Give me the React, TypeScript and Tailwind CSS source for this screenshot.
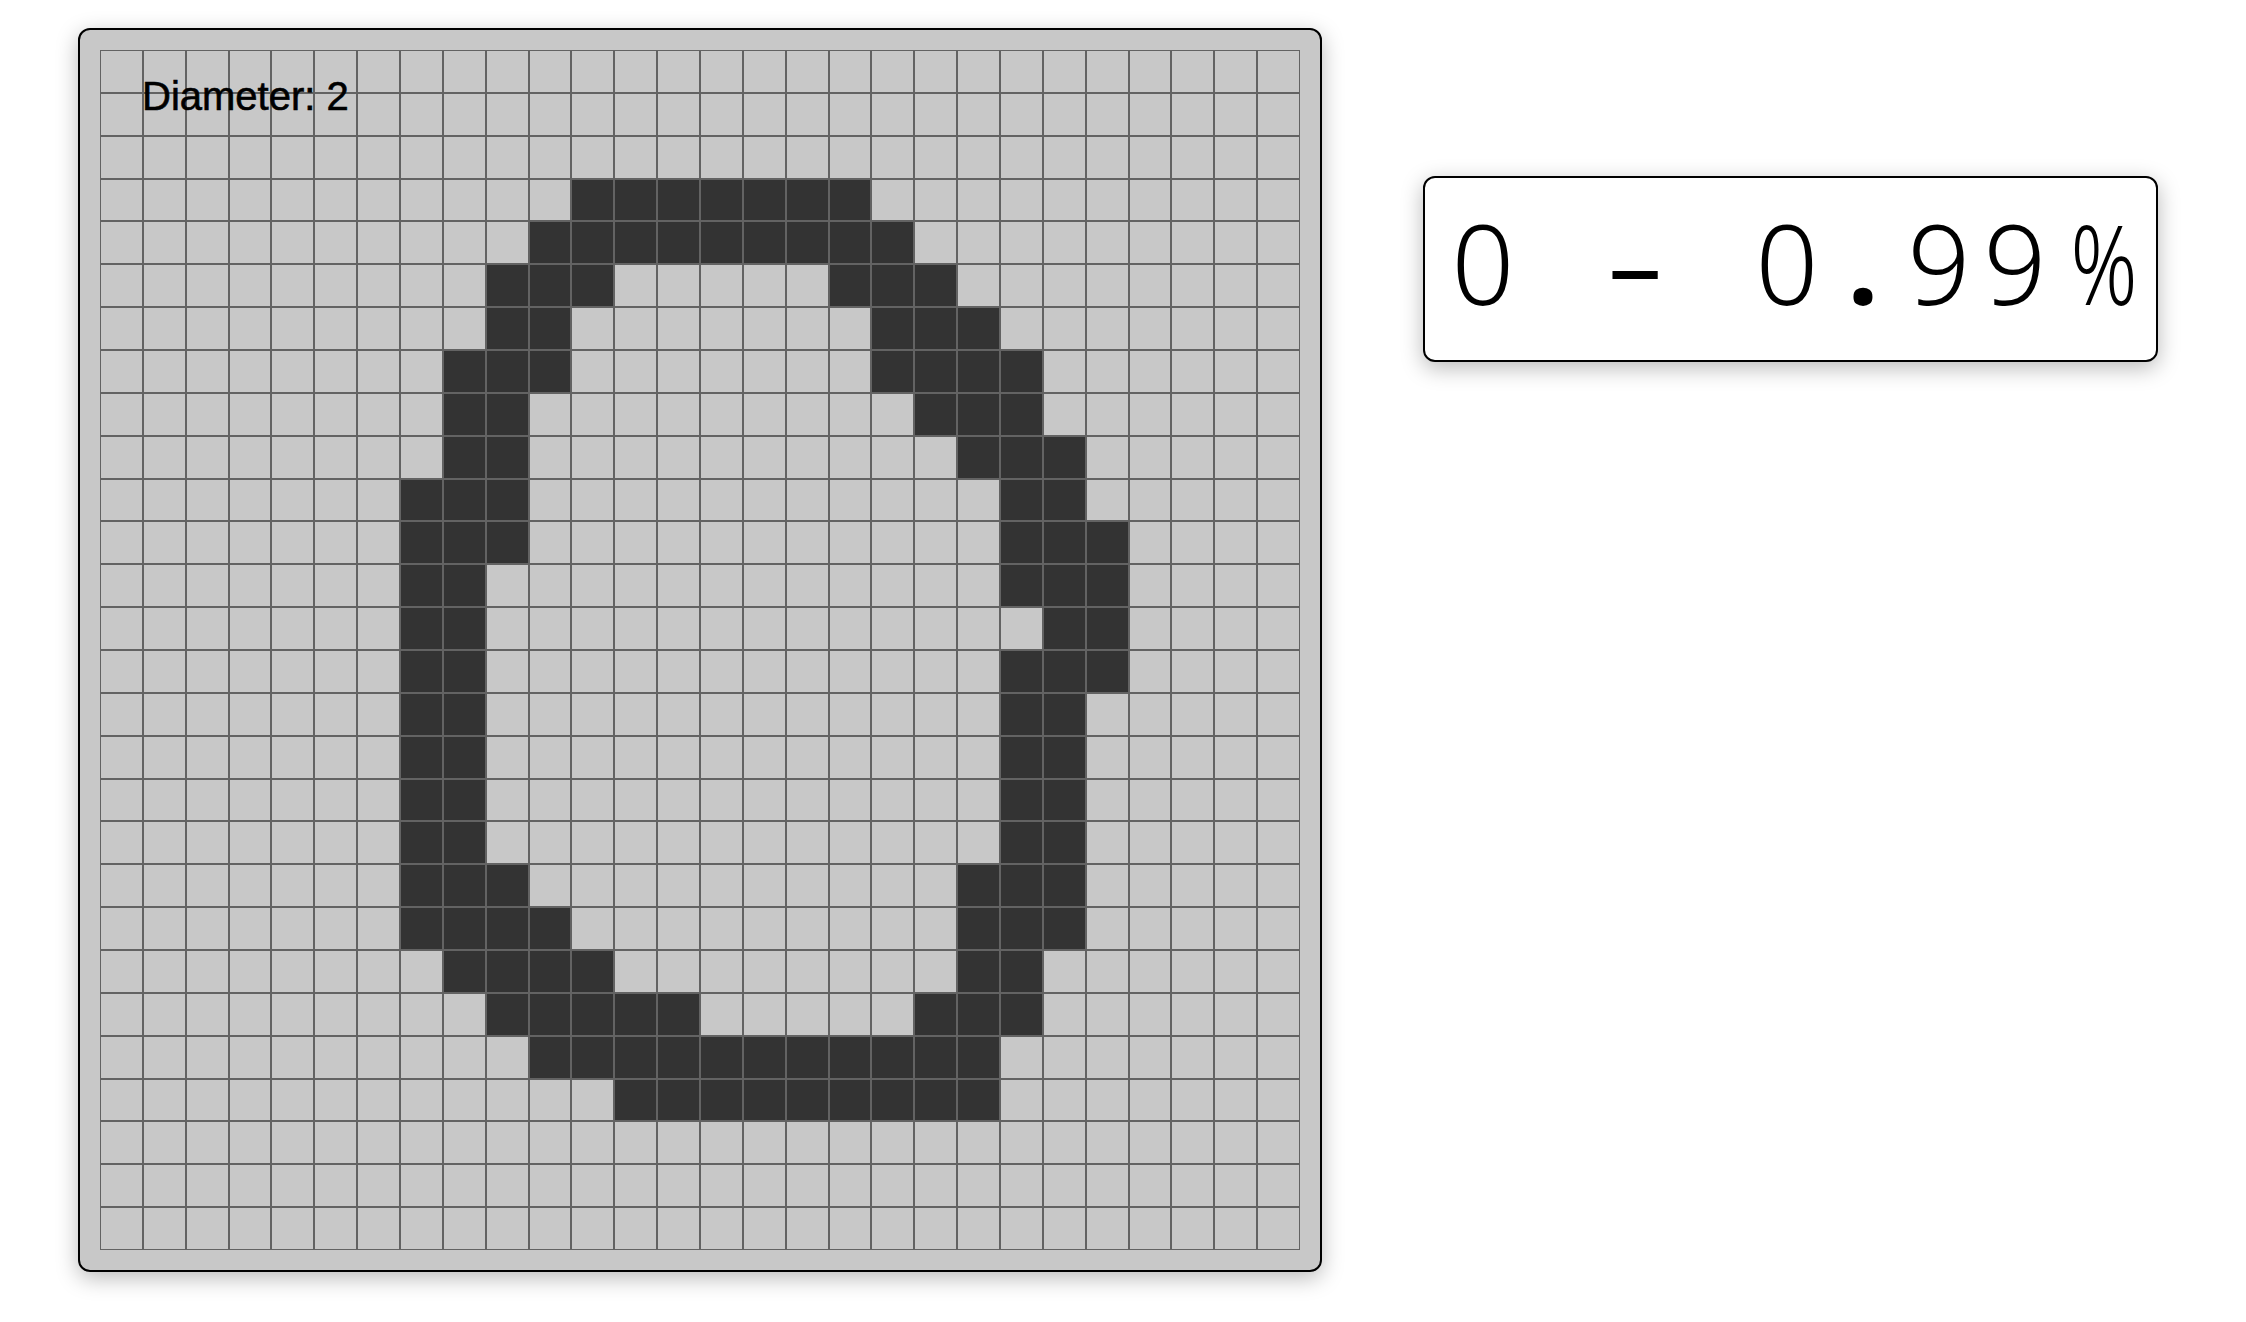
import React from "react";

const SIZE = 28;

// dark cells per row: [row, [fromCol, toCol], ...]
const strokes: Record<number, [number, number][]> = {
  3: [[11, 17]],
  4: [[10, 18]],
  5: [[9, 11], [17, 19]],
  6: [[9, 10], [18, 20]],
  7: [[8, 10], [18, 21]],
  8: [[8, 9], [19, 21]],
  9: [[8, 9], [20, 22]],
  10: [[7, 9], [21, 22]],
  11: [[7, 9], [21, 23]],
  12: [[7, 8], [21, 23]],
  13: [[7, 8], [22, 23]],
  14: [[7, 8], [21, 23]],
  15: [[7, 8], [21, 22]],
  16: [[7, 8], [21, 22]],
  17: [[7, 8], [21, 22]],
  18: [[7, 8], [21, 22]],
  19: [[7, 9], [20, 22]],
  20: [[7, 10], [20, 22]],
  21: [[8, 11], [20, 21]],
  22: [[9, 13], [19, 21]],
  23: [[10, 20]],
  24: [[12, 20]],
};

function isDark(r: number, c: number) {
  const spans = strokes[r];
  if (!spans) return false;
  return spans.some(([a, b]) => c >= a && c <= b);
}

const prediction = "0 - 0.99%";

// per-glyph tweaks so the proportional face reads like the monospace readout
function glyphClass(ch: string) {
  if (ch === "-") return "scale-x-[1.7] scale-y-[1.4] -translate-y-[5px]";
  if (ch === ".") return "font-bold";
  if (ch === "%") return "scale-x-[0.75] translate-x-[8px]";
  return "";
}

export default function App() {
  const cells = [];
  for (let r = 0; r < SIZE; r++) {
    for (let c = 0; c < SIZE; c++) {
      cells.push(
        <div
          key={`${r}-${c}`}
          className={`border border-[#636363] ${isDark(r, c) ? "bg-[#333333]" : "bg-[#c8c8c8]"}`}
        />
      );
    }
  }

  return (
    <div className="min-h-screen bg-white flex items-start pl-[78px] pt-[28px] gap-[101px]">
      {/* drawing pad */}
      <div className="shrink-0 bg-[#c8c8c8] border-2 border-black rounded-[12px] p-[20px] shadow-[0_6px_22px_rgba(0,0,0,0.28)]">
        <div className="relative w-[1200px] h-[1200px] grid grid-cols-[repeat(28,minmax(0,1fr))] grid-rows-[repeat(28,minmax(0,1fr))]">
          {cells}
          <span className="absolute left-[42px] top-[23px] text-[40px] leading-[46px] text-black [-webkit-text-stroke:0.6px_black] font-['Liberation_Sans',Arial,sans-serif]">
            Diameter: 2
          </span>
        </div>
      </div>

      {/* prediction */}
      <div className="shrink-0 mt-[148px] w-[735px] h-[186px] bg-white border-2 border-black rounded-[12px] shadow-[0_6px_22px_rgba(0,0,0,0.28)] flex items-center pl-[20px] pb-[14px]">
        <div className="flex text-[110px] leading-none font-light text-black font-['Noto_Sans',sans-serif]">
          {prediction.split("").map((ch, i) => (
            <span key={i} className={`w-[76px] text-center inline-block whitespace-pre ${glyphClass(ch)}`}>
              {ch}
            </span>
          ))}
        </div>
      </div>
    </div>
  );
}
